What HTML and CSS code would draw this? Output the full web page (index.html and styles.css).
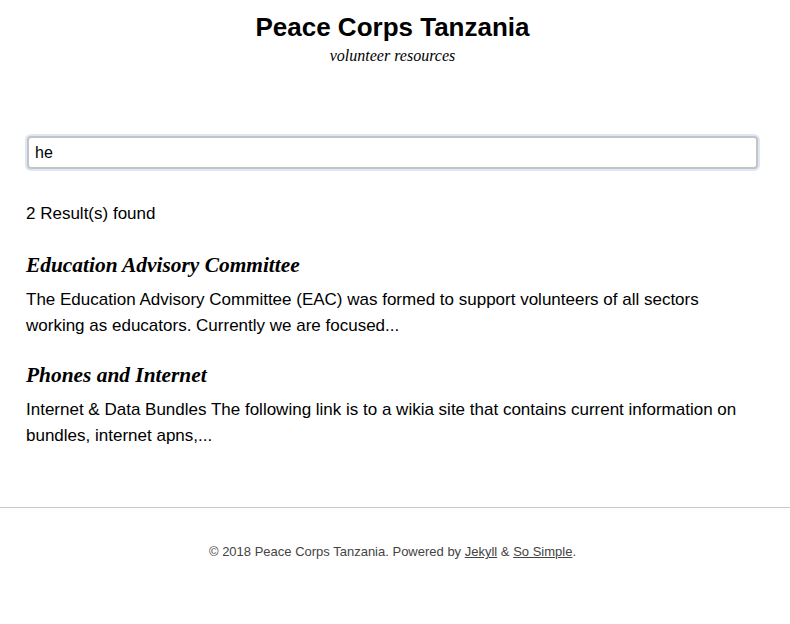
FILE: index.html
```html
<!DOCTYPE html>
<html>
<head>
<meta charset="utf-8">
<link rel="stylesheet" href="styles.css">
</head>
<body>
<header class="masthead">
  <h1 class="site-title">Peace Corps Tanzania</h1>
  <p class="site-desc">volunteer resources</p>
</header>
<main class="content">
  <input class="search" type="text" value="he">
  <p class="count">2 Result(s) found</p>
  <article class="result">
    <h2 class="result-title">Education Advisory Committee</h2>
    <p class="result-text">The Education Advisory Committee (EAC) was formed to support volunteers of all sectors working as educators. Currently we are focused...</p>
  </article>
  <article class="result">
    <h2 class="result-title">Phones and Internet</h2>
    <p class="result-text">Internet &amp; Data Bundles The following link is to a wikia site that contains current information on bundles, internet apns,...</p>
  </article>
</main>
<footer class="footer">
  <p class="footer-text">© 2018 Peace Corps Tanzania. Powered by <a href="#">Jekyll</a> &amp; <a href="#">So Simple</a>.</p>
</footer>
</body>
</html>
```
FILE: styles.css
```css
html, body {
  margin: 0;
  padding: 0;
  background: #fff;
  color: #000;
  font-family: "Liberation Sans", Arial, sans-serif;
}
.masthead {
  text-align: center;
  padding: 11px 31px 0 26px;
}
.site-title {
  margin: 0;
  font-size: 26px;
  line-height: 32px;
  font-weight: bold;
}
.site-desc {
  margin: 4px 0 0;
  font-family: "Liberation Serif", "Times New Roman", serif;
  font-style: italic;
  font-size: 16px;
  line-height: 18px;
}
.content {
  padding: 0 31px 0 26px;
  display: flex;
  flex-direction: column;
}
.search {
  margin: 71px 1px 0;
  box-sizing: border-box;
  width: calc(100% - 2px);
  height: 33px;
  border: 2px solid #c4c4c4;
  border-radius: 4px;
  box-shadow: 0 0 0 2px #dde7f8;
  padding: 0 6px;
  font-family: "Liberation Sans", Arial, sans-serif;
  font-size: 16px;
  color: #000;
  outline: none;
}
.count {
  margin: 34px 0 0;
  font-size: 17px;
  line-height: 22px;
}
.result {
  margin-top: 28px;
}
.result + .result {
  margin-top: 24px;
}
.result-title {
  margin: 0;
  font-family: "Liberation Serif", "Times New Roman", serif;
  font-style: italic;
  font-weight: bold;
  font-size: 21.4px;
  line-height: 24px;
}
.result-text {
  margin: 10px 0 0;
  font-size: 17px;
  line-height: 26px;
}
.footer {
  margin-top: 58px;
  border-top: 1px solid #c8c8c8;
  padding: 0 31px 0 26px;
  text-align: center;
}
.footer-text {
  margin: 35px 0 0;
  font-size: 13px;
  line-height: 18px;
  color: #444;
}
.footer-text a {
  color: #444;
  text-decoration: underline;
}
```
